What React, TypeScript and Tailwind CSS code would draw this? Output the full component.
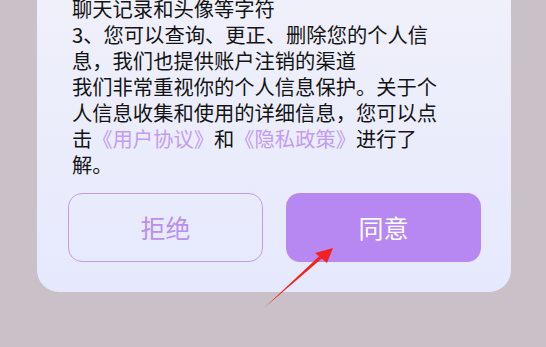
export default function App() {
  return (
    <div className="relative h-[347px] w-[546px] overflow-hidden bg-[#cac1c8] font-['Noto_Sans_CJK_SC',sans-serif]">
      <div className="ml-[37px] flex h-[292px] w-[474px] flex-col rounded-b-[22px] bg-gradient-to-b from-[#eff0fa] to-[#e6e9fd]">
        <div className="ml-[35px] mt-[-5px] w-[370px] text-[20.3px] leading-[26px] text-[#141414]">
          <p>聊天记录和头像等字符</p>
          <p>3、您可以查询、更正、删除您的个人信息，我们也提供账户注销的渠道</p>
          <p>
            我们非常重视你的个人信息保护。关于个人信息收集和使用的详细信息，您可以点击
            <span className="text-[#c39cf1]">《用户协议》</span>和
            <span className="text-[#c39cf1]">《隐私政策》</span>进行了解。
          </p>
        </div>
        <div className="ml-[31px] mt-[16px] flex gap-[23px]">
          <button className="flex h-[69px] w-[195px] items-center justify-center rounded-[14px] border border-[#c39bef] text-[25px] text-[#b98ff0]">
            拒绝
          </button>
          <button className="flex h-[69px] w-[195px] items-center justify-center rounded-[14px] bg-[#b888f2] text-[25px] text-white">
            同意
          </button>
        </div>
      </div>
      {/* red pointer arrow */}
      <svg className="absolute left-0 top-0" width="546" height="347" viewBox="0 0 546 347">
        <path d="M264 308 L321 254.5 L323 257.5 Z" fill="#f2231f" />
        <path d="M333 248 L315 253 L327 263 Z" fill="#f2231f" />
      </svg>
    </div>
  )
}
